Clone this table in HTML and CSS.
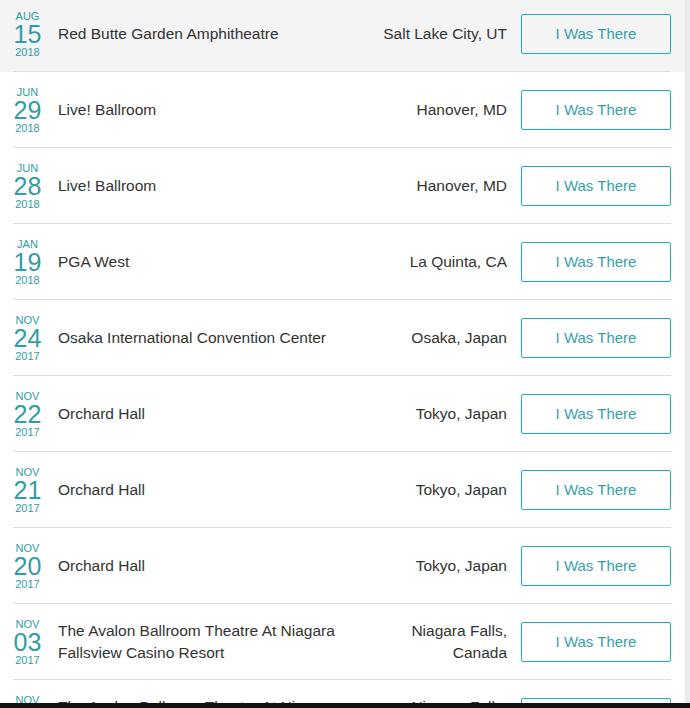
FILE: index.html
```html
<!DOCTYPE html>
<html lang="en">
<head>
<meta charset="utf-8">
<title>Shows</title>
<link rel="stylesheet" href="styles.css">
</head>
<body>
<ul class="shows">
  <li class="show show--active"><div class="show__inner">
    <div class="date"><span class="date__month">AUG</span><span class="date__day">15</span><span class="date__year">2018</span></div>
    <div class="venue">Red Butte Garden Amphitheatre</div>
    <div class="city">Salt Lake City, UT</div>
    <button class="btn">I Was There</button>
  </div></li>
  <li class="show"><div class="show__inner">
    <div class="date"><span class="date__month">JUN</span><span class="date__day">29</span><span class="date__year">2018</span></div>
    <div class="venue">Live! Ballroom</div>
    <div class="city">Hanover, MD</div>
    <button class="btn">I Was There</button>
  </div></li>
  <li class="show"><div class="show__inner">
    <div class="date"><span class="date__month">JUN</span><span class="date__day">28</span><span class="date__year">2018</span></div>
    <div class="venue">Live! Ballroom</div>
    <div class="city">Hanover, MD</div>
    <button class="btn">I Was There</button>
  </div></li>
  <li class="show"><div class="show__inner">
    <div class="date"><span class="date__month">JAN</span><span class="date__day">19</span><span class="date__year">2018</span></div>
    <div class="venue">PGA West</div>
    <div class="city">La Quinta, CA</div>
    <button class="btn">I Was There</button>
  </div></li>
  <li class="show"><div class="show__inner">
    <div class="date"><span class="date__month">NOV</span><span class="date__day">24</span><span class="date__year">2017</span></div>
    <div class="venue">Osaka International Convention Center</div>
    <div class="city">Osaka, Japan</div>
    <button class="btn">I Was There</button>
  </div></li>
  <li class="show"><div class="show__inner">
    <div class="date"><span class="date__month">NOV</span><span class="date__day">22</span><span class="date__year">2017</span></div>
    <div class="venue">Orchard Hall</div>
    <div class="city">Tokyo, Japan</div>
    <button class="btn">I Was There</button>
  </div></li>
  <li class="show"><div class="show__inner">
    <div class="date"><span class="date__month">NOV</span><span class="date__day">21</span><span class="date__year">2017</span></div>
    <div class="venue">Orchard Hall</div>
    <div class="city">Tokyo, Japan</div>
    <button class="btn">I Was There</button>
  </div></li>
  <li class="show"><div class="show__inner">
    <div class="date"><span class="date__month">NOV</span><span class="date__day">20</span><span class="date__year">2017</span></div>
    <div class="venue">Orchard Hall</div>
    <div class="city">Tokyo, Japan</div>
    <button class="btn">I Was There</button>
  </div></li>
  <li class="show"><div class="show__inner">
    <div class="date"><span class="date__month">NOV</span><span class="date__day">03</span><span class="date__year">2017</span></div>
    <div class="venue">The Avalon Ballroom Theatre At Niagara Fallsview Casino Resort</div>
    <div class="city">Niagara Falls, Canada</div>
    <button class="btn">I Was There</button>
  </div></li>
  <li class="show"><div class="show__inner">
    <div class="date"><span class="date__month">NOV</span><span class="date__day">02</span><span class="date__year">2017</span></div>
    <div class="venue">The Avalon Ballroom Theatre At Niagara Fallsview Casino Resort</div>
    <div class="city">Niagara Falls, Canada</div>
    <button class="btn">I Was There</button>
  </div></li>
</ul>
<div class="bottom-bar"></div>
</body>
</html>
```
FILE: styles.css
```css
html {
  background: #ebebeb;
  overflow: hidden;
}
body {
  margin: 0;
  font-family: "Liberation Sans", Arial, sans-serif;
  color: #333;
}
.shows {
  list-style: none;
  margin: -4px 0 0 0;
  padding: 0;
  width: 685px;
  background: #fff;
}
.show {
  padding: 0 14px 0 13px;
}
.show--active {
  background: #f4f4f4;
}
.show__inner {
  display: flex;
  align-items: center;
  height: 75px;
  border-bottom: 1px solid #dddddd;
}
.date {
  width: 29px;
  flex: none;
  display: flex;
  flex-direction: column;
  align-items: center;
  color: #2f9da3;
  margin-right: 16px;
}
.date__month,
.date__year {
  font-size: 11px;
  line-height: 12px;
}
.date__day {
  font-size: 25px;
  line-height: 24px;
}
.venue {
  flex: 1;
  font-size: 15.5px;
  line-height: 22px;
  padding-right: 16px;
}
.city {
  flex: none;
  max-width: 130px;
  text-align: right;
  font-size: 15.5px;
  line-height: 22px;
  margin-right: 14px;
}
.btn {
  flex: none;
  width: 150px;
  height: 40px;
  border: 1px solid #1fb0b0;
  border-radius: 2px;
  background: transparent;
  color: #3a9fa8;
  font-family: "Liberation Sans", Arial, sans-serif;
  font-size: 15px;
  padding: 0;
}
.bottom-bar {
  position: fixed;
  left: 0;
  right: 0;
  bottom: 0;
  height: 5px;
  background: #121212;
}
```
